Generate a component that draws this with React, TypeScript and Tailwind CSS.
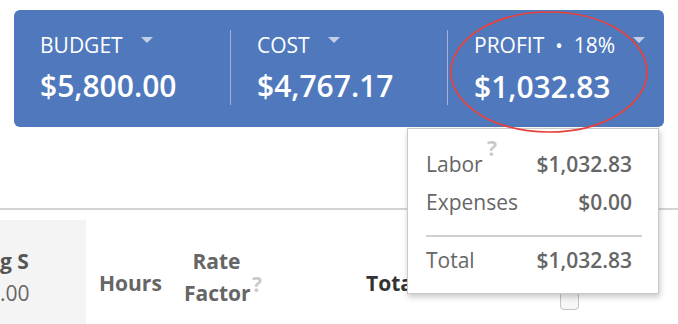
export default function App() {
  return (
    <div className="relative w-[678px] h-[324px] overflow-hidden bg-white font-['Open_Sans',sans-serif]">
      <div className="mx-[14px] mt-[10px] flex rounded-[6px] bg-[#5079bd] pt-[20px] pb-[22px] text-white">
        <Stat label="BUDGET" value="$5,800.00" />
        <Stat label="COST" value="$4,767.17" divider />
        <Stat
          label={
            <>
              PROFIT<span className="mx-[11px] text-[20px]">•</span>18%
            </>
          }
          value="$1,032.83"
          divider
        />
      </div>

      <div className="mt-[81px] h-[2px] bg-[#d4d4d4]" />

      <div className="mt-[10px] flex h-[120px] text-[21px] leading-[32px]">
        <div className="w-[86px] bg-[#f4f4f4] pt-[25px] text-[#555]">
          <div className="font-bold">g S</div>
          <div className="text-[#666]">.00</div>
        </div>
        <div className="ml-[13px] w-[62px] pt-[47px] font-bold text-[#666]">Hours</div>
        <div className="ml-[23px] w-[65px] pt-[25px] text-center font-bold text-[#666]">
          <div>Rate</div>
          <div className="relative">
            Factor
            <span className="absolute left-[68px] top-[-9px] text-[21px] text-[#cacaca]">?</span>
          </div>
        </div>
        <div className="ml-[117px] w-[194px] pt-[47px] font-bold text-[#333]">Total</div>
        <div className="pt-[71px]">
          <div className="h-[19px] w-[19px] rounded-[4px] border border-[#c4c4c4] bg-[#f7f7f7]" />
        </div>
      </div>

      {/* profit breakdown popover */}
      <div className="absolute left-[407px] top-[128px] w-[252px] border border-[#c9c9c9] bg-white pt-[16px] pb-[14px] pl-[18px] pr-[16px] text-[21px] leading-[38px] text-[#666] shadow-[1px_3px_6px_rgba(0,0,0,0.22)]">
        <div className="flex justify-between pr-[10px]">
          <span className="relative">
            Labor
            <span className="absolute left-[61px] top-[-16px] text-[21px] font-bold text-[#cacaca]">?</span>
          </span>
          <span className="font-semibold">$1,032.83</span>
        </div>
        <div className="flex justify-between pr-[10px]">
          <span>Expenses</span>
          <span className="font-semibold">$0.00</span>
        </div>
        <div className="mt-[14px] mb-[4px] h-[2px] bg-[#d0d0d0]" />
        <div className="flex justify-between pr-[10px]">
          <span>Total</span>
          <span className="font-semibold">$1,032.83</span>
        </div>
      </div>

      {/* red annotation ring */}
      <svg className="pointer-events-none absolute left-0 top-0" width="678" height="324">
        <ellipse cx="549" cy="72" rx="98" ry="60" fill="none" stroke="#e8403a" strokeWidth="1.7" />
      </svg>
    </div>
  );
}

function Stat({
  label,
  value,
  divider,
}: {
  label: React.ReactNode;
  value: string;
  divider?: boolean;
}) {
  return (
    <div className={`flex-1 h-[75px] pl-[26px] ${divider ? "border-l border-[#9fb3dd]" : ""}`}>
      <div className="mt-[1px] flex items-start text-[21px] leading-[28px]">
        <span>{label}</span>
        <span className="ml-[18px] mt-[6px] h-0 w-0 border-x-[6px] border-t-[6px] border-x-transparent border-t-[#c3cfe9]" />
      </div>
      <div className="mt-[9px] text-[30px] font-semibold leading-[36px]">{value}</div>
    </div>
  );
}
